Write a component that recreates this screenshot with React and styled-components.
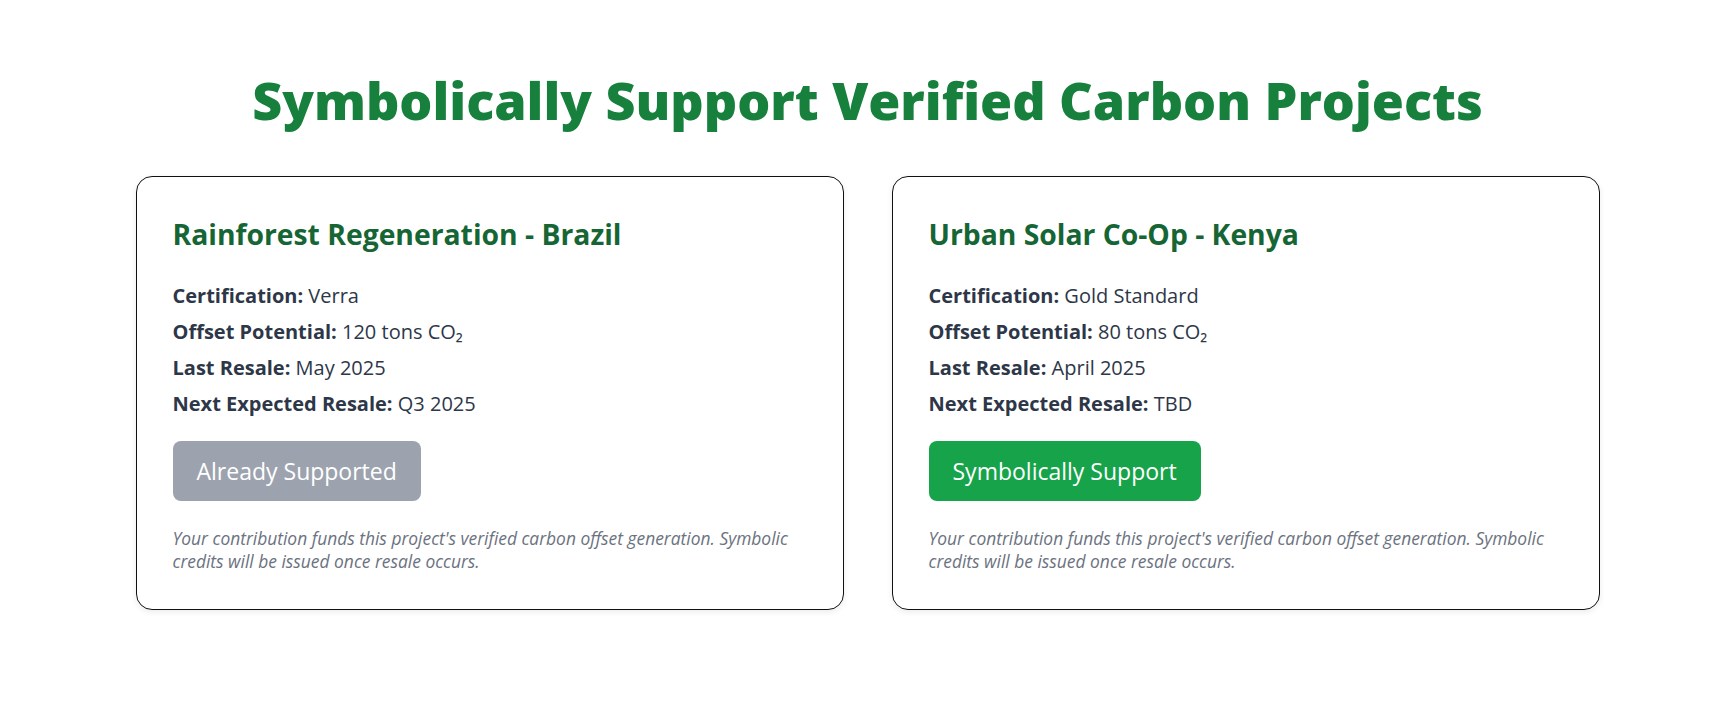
import React from 'react'
import styled, { createGlobalStyle } from 'styled-components'

const GlobalStyle = createGlobalStyle`
  body {
    margin: 0;
    background: #ffffff;
    font-family: "Segoe UI", "Open Sans", "Noto Sans", sans-serif;
  }
`

const Page = styled.main`
  padding: 66px 135px 60px;
`

const Title = styled.h1`
  margin: 0 0 43px;
  text-align: center;
  font-size: 52px;
  line-height: 67px;
  font-weight: 800;
  color: #17803d;
`

const Grid = styled.div`
  display: grid;
  grid-template-columns: 1fr 1fr;
  gap: 48px;
  max-width: 1464px;
  margin: 0 auto;
`

const Card = styled.section`
  border: 1px solid #111;
  border-radius: 16px;
  padding: 40px 36px 36px;
  box-shadow: 0 2px 6px rgba(0, 0, 0, 0.08);
  background: #fff;
`

const Heading = styled.h2`
  margin: 0 0 27px;
  font-size: 28.3px;
  line-height: 34px;
  font-weight: 700;
  color: #166534;
`

const Row = styled.p`
  margin: 0;
  font-size: 20px;
  line-height: 36px;
  color: #2d3748;

  strong {
    font-weight: 700;
  }
`

const Button = styled.button`
  display: inline-block;
  margin-top: 19px;
  height: 60px;
  padding: 0 24px;
  border: none;
  border-radius: 8px;
  font-family: inherit;
  font-size: 23px;
  color: #fff;
  background: ${(p) => (p.$done ? '#9ca3af' : '#16a34a')};
  cursor: ${(p) => (p.$done ? 'default' : 'pointer')};
`

const Note = styled.p`
  margin: 26px 0 0;
  font-size: 17.4px;
  line-height: 23px;
  font-style: italic;
  color: #6b7280;
`

const projects = [
  {
    name: 'Rainforest Regeneration - Brazil',
    cert: 'Verra',
    offset: '120 tons CO₂',
    last: 'May 2025',
    next: 'Q3 2025',
    supported: true,
  },
  {
    name: 'Urban Solar Co-Op - Kenya',
    cert: 'Gold Standard',
    offset: '80 tons CO₂',
    last: 'April 2025',
    next: 'TBD',
    supported: false,
  },
]

export default function App() {
  return (
    <Page>
      <GlobalStyle />
      <Title>Symbolically Support Verified Carbon Projects</Title>
      <Grid>
        {projects.map((p) => (
          <Card key={p.name}>
            <Heading>{p.name}</Heading>
            <Row>
              <strong>Certification:</strong> {p.cert}
            </Row>
            <Row>
              <strong>Offset Potential:</strong> {p.offset}
            </Row>
            <Row>
              <strong>Last Resale:</strong> {p.last}
            </Row>
            <Row>
              <strong>Next Expected Resale:</strong> {p.next}
            </Row>
            <Button $done={p.supported} disabled={p.supported}>
              {p.supported ? 'Already Supported' : 'Symbolically Support'}
            </Button>
            <Note>
              Your contribution funds this project's verified carbon offset
              generation. Symbolic credits will be issued once resale occurs.
            </Note>
          </Card>
        ))}
      </Grid>
    </Page>
  )
}
